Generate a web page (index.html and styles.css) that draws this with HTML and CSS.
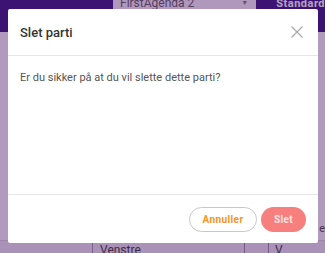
FILE: index.html
```html
<!DOCTYPE html>
<html lang="da">
<head>
<meta charset="utf-8">
<link rel="stylesheet" href="styles.css">
</head>
<body>
<div class="page">
  <div class="topbar">
    <div class="select"><span>FirstAgenda 2</span><span class="caret">▼</span></div>
    <div class="std">Standard</div>
  </div>
  <div class="content">
    <div class="side-e">e</div>
    <div class="row">
      <div class="cell c0"></div>
      <div class="cell c1">Venstre</div>
      <div class="cell c2"></div>
      <div class="cell c3">V</div>
    </div>
  </div>
</div>
<div class="overlay"></div>
<div class="modal">
  <div class="modal-header">
    <h2 class="title">Slet parti</h2>
    <svg class="close" width="12" height="12" viewBox="0 0 12 12"><path d="M0.5 0.5 L11.5 11.5 M11.5 0.5 L0.5 11.5" stroke="#a9a9a9" stroke-width="1.2" fill="none"/></svg>
  </div>
  <div class="modal-body">
    <p>Er du sikker på at du vil slette dette parti?</p>
  </div>
  <div class="modal-footer">
    <button class="btn btn-cancel">Annuller</button>
    <button class="btn btn-delete">Slet</button>
  </div>
</div>
</body>
</html>
```
FILE: styles.css
```css
html, body {
  margin: 0;
  padding: 0;
}
body {
  width: 325px;
  height: 253px;
  overflow: hidden;
  font-family: Roboto, "Noto Sans", sans-serif;
  position: relative;
  background: #ffffff;
}
.page {
  display: flex;
  flex-direction: column;
  height: 253px;
}
.topbar {
  height: 32px;
  background: #2e0c78;
  display: flex;
  align-items: flex-start;
  padding-left: 113px;
  box-sizing: border-box;
}
.select {
  width: 155px;
  height: 18px;
  background: #f3f0f5;
  margin-top: -6px;
  display: flex;
  justify-content: space-between;
  align-items: center;
  padding: 0 8px 0 7px;
  box-sizing: border-box;
  font-size: 12px;
  color: #555;
}
.caret {
  font-size: 7px;
  color: #777;
}
.std {
  margin-left: 20px;
  margin-top: -3px;
  color: #fff;
  font-weight: 700;
  font-size: 11px;
  letter-spacing: 0.5px;
}
.content {
  flex: 1;
  background: #f6f3f8;
  display: flex;
  flex-direction: column;
  justify-content: flex-end;
  position: relative;
}
.side-e {
  position: absolute;
  right: 0;
  top: 190px;
  font-size: 11px;
  color: #444;
}
.row {
  height: 12px;
  display: flex;
  background: #e8e3ec;
  border-top: 1px solid #d5cdd9;
}
.cell {
  border-right: 1px solid #8e7f99;
  font-size: 12px;
  color: #333;
  padding-left: 7px;
  line-height: 18px;
  box-sizing: border-box;
}
.c0 { width: 93px; padding: 0; border-right-color: #9a8aa5; }
.c1 { width: 152px; }
.c2 { width: 24px; }
.c3 { flex: 1; border-right: none; padding-left: 6px; }
.overlay {
  position: absolute;
  inset: 0;
  background: rgba(80, 30, 110, 0.42);
}
.modal {
  position: absolute;
  left: 8px;
  top: 9px;
  width: 310px;
  height: 234px;
  background: #fff;
  border-radius: 2px;
  display: flex;
  flex-direction: column;
  box-sizing: border-box;
}
.modal-header {
  height: 46px;
  border-bottom: 1px solid #e6e6e6;
  display: flex;
  align-items: center;
  justify-content: space-between;
  padding: 0 15px 0 12px;
  flex: none;
}
.title {
  margin: 0;
  font-size: 13px;
  font-weight: 500;
  color: #333;
}
.close {
  display: block;
}
.modal-body {
  flex: 1;
  border-bottom: 1px solid #e6e6e6;
  padding: 0 12px;
}
.modal-body p {
  margin: 15px 0 0;
  font-size: 11px;
  color: #555;
}
.modal-footer {
  flex: none;
  height: 48px;
  display: flex;
  justify-content: flex-end;
  align-items: flex-start;
  padding: 12px 12px 0;
  gap: 4px;
  box-sizing: border-box;
}
.btn {
  height: 25px;
  border-radius: 13px;
  font-family: Roboto, "Noto Sans", sans-serif;
  font-weight: 700;
  font-size: 10px;
  letter-spacing: 0.4px;
  cursor: pointer;
  padding: 0;
}
.btn-cancel {
  width: 68px;
  background: #fff;
  border: 1px solid #c8c8c8;
  color: #f7931e;
}
.btn-delete {
  width: 45px;
  background: #f77f7d;
  border: none;
  color: #fde4e4;
}
```
